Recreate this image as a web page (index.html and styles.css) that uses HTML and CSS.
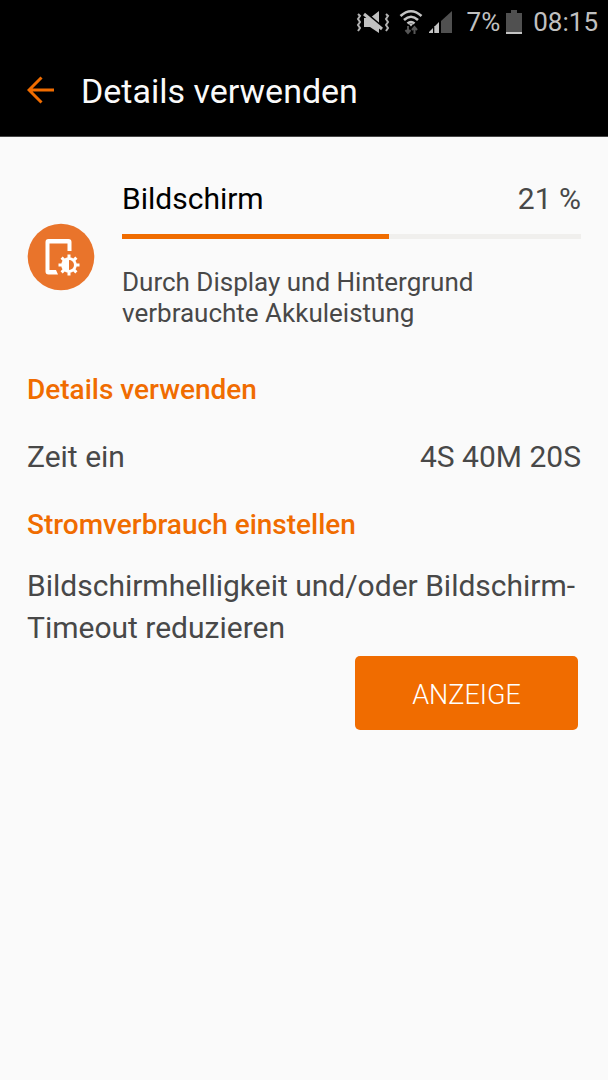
FILE: index.html
```html
<!DOCTYPE html>
<html lang="de">
<head>
<meta charset="utf-8">
<meta name="viewport" content="width=device-width, initial-scale=1">
<title>Details verwenden</title>
<link rel="stylesheet" href="styles.css">
</head>
<body>
<div class="status-bar">
  <svg class="mute-icon" width="34" height="24" viewBox="0 0 34 24" aria-hidden="true">
    <path d="M8 8h6l9-7v22l-9-6H8z" fill="#c0c0c0"/>
    <path d="M8 2l19 16" stroke="#000" stroke-width="3"/>
    <path d="M8 4l18 15" stroke="#c0c0c0" stroke-width="3"/>
    <path d="M2 4l2 2-2 3 2 3-2 3 2 3-2 3M30 4l2 2-2 3 2 3-2 3 2 3-2 3" fill="none" stroke="#b0b0b0" stroke-width="2"/>
  </svg>
  <svg class="wifi-icon" width="24" height="26" viewBox="0 0 24 26" aria-hidden="true">
    <path d="M1.500 7Q12-2.500 22.500 7M5 11Q12 4.500 19 11M8.500 14.500Q12 11.500 15.500 14.500" fill="none" stroke="#c4c4c4" stroke-width="2.600"/>
    <path d="M9.500 14.500h5L12 17.500z" fill="#c4c4c4"/>
    <path d="M9 17v7M6.500 21L9 24l2.500-3M15.500 25v-7M13 21l2.500-3 2.500 3" fill="none" stroke="#565656" stroke-width="2"/>
  </svg>
  <svg class="signal-icon" width="24" height="24" viewBox="0 0 24 24" aria-hidden="true">
    <path d="M0 23v-1l4-4v5zM5 23v-6l5-5v11z" fill="#c4c4c4"/>
    <path d="M12 23V11L23 1v22z" fill="#505050"/>
    <path d="M5 16h1v7H5z" fill="#888"/>
  </svg>
  <span class="battery-level">7%</span>
  <svg class="battery-icon" width="16" height="24" viewBox="0 0 16 24" aria-hidden="true">
    <path d="M0 3h5V0h6v3h5v21H0z" fill="#505050"/>
    <path d="M0 22h16v2H0z" fill="#c4c4c4"/>
  </svg>
  <time>08:15</time>
</div>
<header class="app-bar">
  <button class="back" type="button" aria-label="Zurück">
    <svg width="28" height="28" viewBox="0 0 28 28" aria-hidden="true"><path d="M27 14H3M14.500 1.500L2 14l12.500 12.500" fill="none" stroke="#f06c00" stroke-width="3"/></svg>
  </button>
  <h1>Details verwenden</h1>
</header>
<main>
  <section class="usage">
    <svg class="usage-icon" width="68" height="68" viewBox="0 0 68 68" aria-hidden="true">
      <circle cx="34" cy="34" r="33.300" fill="#e9742b"/>
      <path d="M31 51.500H21.500Q18.500 51.500 18.500 48.500V19q0-3 3-3h20q3 0 3 3v9h-4v-7.500H22.500v26.500H29z" fill="#fff"/>
      <g transform="translate(42 42)">
        <path d="M0-10.500V10.500M-10.500 0H10.500M-7.400-7.400L7.400 7.400M-7.400 7.400L7.400-7.400" stroke="#fff" stroke-width="3"/>
        <circle r="7.800" fill="#fff"/>
        <path d="M0-5A5 5 0 0 1 0 5z" fill="#e9742b"/>
      </g>
    </svg>
    <div class="usage-body">
      <div class="row">
        <h2>Bildschirm</h2>
        <span>21 %</span>
      </div>
      <div class="track" role="progressbar" aria-label="Bildschirm" aria-valuemin="0" aria-valuemax="100" aria-valuenow="58"><div class="fill" style="width:58.1%"></div></div>
      <p class="description">Durch Display und Hintergrund verbrauchte Akkuleistung</p>
    </div>
  </section>
  <section class="details">
    <h3>Details verwenden</h3>
    <div class="row">
      <span>Zeit ein</span>
      <span>4S 40M 20S</span>
    </div>
  </section>
  <section class="adjust">
    <h3>Stromverbrauch einstellen</h3>
    <p>Bildschirmhelligkeit und/oder Bildschirm-Timeout reduzieren</p>
    <button class="action" type="button">ANZEIGE</button>
  </section>
</main>
</body>
</html>
```
FILE: styles.css
```css
* {
  box-sizing: border-box;
}

body {
  margin: 0;
  background: #fafafa;
  color: #484848;
  font: 30px/42px Roboto, sans-serif;
}

h1, h2, h3, p {
  margin: 0;
  font-weight: 400;
}

button {
  border: 0;
  font-family: inherit;
  cursor: pointer;
}

svg {
  display: block;
  flex: none;
}

.status-bar {
  display: flex;
  align-items: center;
  justify-content: flex-end;
  height: 44px;
  padding-right: 10px;
  background: #000;
  color: #c0c0c0;
  font-size: 26px;
  line-height: 46px;
}

.wifi-icon {
  margin-left: 9px;
}

.signal-icon {
  margin-left: 6px;
}

.battery-level {
  margin-left: 14px;
}

.battery-icon {
  margin: 0 11px 0 6px;
}

.app-bar {
  display: flex;
  align-items: center;
  gap: 26px;
  height: 93px;
  padding: 0 27px;
  border-bottom: 1px solid #464646;
  background: #000;
  color: #fafafa;
}

.app-bar h1 {
  padding-top: 2px;
  font-size: 34px;
  line-height: 42px;
}

.back {
  padding: 0;
  background: none;
}

main {
  padding: 41px 27px;
}

.usage {
  display: flex;
  align-items: center;
  gap: 27px;
}

.usage-icon {
  margin-top: 6px;
}

.usage-body {
  flex: 1;
}

.row {
  display: flex;
  justify-content: space-between;
}

h2 {
  color: #000;
  font-size: 30px;
}

.track {
  height: 5px;
  margin-top: 14px;
  background: #f0efed;
}

.fill {
  height: 100%;
  background: #f06c00;
}

.description {
  max-width: 400px;
  margin-top: 28px;
  font-size: 26px;
  line-height: 31px;
}

h3 {
  color: #f06c00;
  font-size: 28px;
  font-weight: 500;
  line-height: 36px;
}

.details {
  margin-top: 43px;
}

.details .row {
  margin-top: 28px;
}

.adjust {
  display: flex;
  flex-direction: column;
  margin-top: 29px;
}

.adjust p {
  margin-top: 22px;
}

.action {
  align-self: flex-end;
  width: 223px;
  height: 74px;
  margin: 7px 3px 0 0;
  padding-top: 4px;
  border-radius: 5px;
  background: #f06c00;
  color: #fff;
  font-size: 27px;
  font-weight: 300;
}
```
